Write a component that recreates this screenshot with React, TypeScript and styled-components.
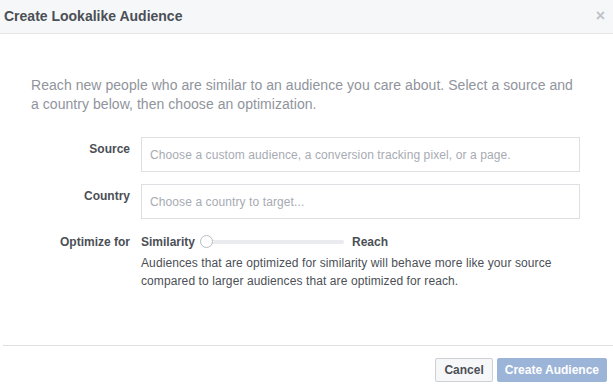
import React from "react";
import styled, { createGlobalStyle } from "styled-components";

const Global = createGlobalStyle`
  html, body { margin: 0; padding: 0; background: #fff; }
  body { font-family: "Liberation Sans", Arial, sans-serif; }
  * { box-sizing: border-box; }
`;

const Dialog = styled.div`
  width: 613px;
  height: 385px;
  display: flex;
  flex-direction: column;
  background: #fff;
`;

const Header = styled.div`
  height: 34px;
  flex: none;
  display: flex;
  align-items: center;
  justify-content: space-between;
  padding: 0 8px 1px 4px;
  background: #f6f7f9;
  border-bottom: 1px solid #e5e5e5;
`;

const Title = styled.h1`
  margin: 0;
  font-size: 14px;
  font-weight: bold;
  color: #4b4f56;
  line-height: 18px;
`;

const Close = styled.span`
  font-size: 16px;
  color: #bec2c9;
  line-height: 16px;
  font-weight: bold;
`;

const Body = styled.div`
  flex: 1;
  padding: 42px 31px 0 31px;
`;

const Intro = styled.p`
  margin: 0 0 23px 0;
  font-size: 14px;
  line-height: 19px;
  color: #90949c;
  letter-spacing: 0.05px;
`;

const Row = styled.div<{ $top?: number }>`
  display: flex;
  align-items: flex-start;
  margin-top: ${(p) => p.$top ?? 0}px;
`;

const Label = styled.label<{ $pad?: number }>`
  width: 110px;
  flex: none;
  text-align: right;
  padding-top: ${(p) => p.$pad ?? 0}px;
  padding-right: 11px;
  font-size: 12px;
  font-weight: bold;
  color: #4b4f56;
  line-height: 16px;
`;

const Input = styled.div`
  width: 439px;
  height: 35px;
  border: 1px solid #dddfe2;
  display: flex;
  align-items: center;
  padding: 0 8px;
  font-size: 12px;
  color: #a7abb3;
  letter-spacing: 0.1px;
`;

const Field = styled.div`
  display: flex;
  flex-direction: column;
`;

const SliderRow = styled.div`
  display: flex;
  align-items: center;
  height: 16px;
  font-size: 12px;
  font-weight: bold;
  color: #4b4f56;
`;

const Track = styled.div`
  position: relative;
  width: 144px;
  height: 4px;
  margin: 0 8px 0 5px;
  background: #e9ebee;
  border-radius: 2px;
`;

const Knob = styled.div`
  position: absolute;
  left: 0;
  top: -5px;
  width: 13px;
  height: 13px;
  border-radius: 50%;
  background: #fff;
  border: 1px solid #b8bcc2;
`;

const Help = styled.p`
  margin: 4px 0 0 0;
  font-size: 12px;
  line-height: 18px;
  color: #4b4f56;
  width: 425px;
  letter-spacing: 0.1px;
`;

const Footer = styled.div`
  flex: none;
  margin-left: 3px;
  border-top: 1px solid #dddfe2;
  height: 40px;
  display: flex;
  align-items: flex-start;
  justify-content: flex-end;
  gap: 4px;
  padding: 12px 6px 0 0;
`;

const Button = styled.button<{ $primary?: boolean }>`
  height: 24px;
  padding: 0 ${(p) => (p.$primary ? 7 : 8)}px;
  font-family: "Liberation Sans", Arial, sans-serif;
  font-size: 12px;
  font-weight: bold;
  border-radius: 2px;
  border: 1px solid ${(p) => (p.$primary ? "#9cb4d8" : "#ced0d4")};
  background: ${(p) => (p.$primary ? "#9cb4d8" : "#f6f7f9")};
  color: ${(p) => (p.$primary ? "#fff" : "#4b4f56")};
`;

export default function App() {
  return (
    <>
      <Global />
      <Dialog>
        <Header>
          <Title>Create Lookalike Audience</Title>
          <Close>×</Close>
        </Header>
        <Body>
          <Intro>
            Reach new people who are similar to an audience you care about. Select a source and
            a country below, then choose an optimization.
          </Intro>
          <Row>
            <Label $pad={4}>Source</Label>
            <Input>Choose a custom audience, a conversion tracking pixel, or a page.</Input>
          </Row>
          <Row $top={12}>
            <Label $pad={4}>Country</Label>
            <Input>Choose a country to target...</Input>
          </Row>
          <Row $top={15}>
            <Label $pad={0}>Optimize for</Label>
            <Field>
              <SliderRow>
                Similarity
                <Track>
                  <Knob />
                </Track>
                Reach
              </SliderRow>
              <Help>
                Audiences that are optimized for similarity will behave more like your source
                compared to larger audiences that are optimized for reach.
              </Help>
            </Field>
          </Row>
        </Body>
        <Footer>
          <Button>Cancel</Button>
          <Button $primary>Create Audience</Button>
        </Footer>
      </Dialog>
    </>
  );
}
